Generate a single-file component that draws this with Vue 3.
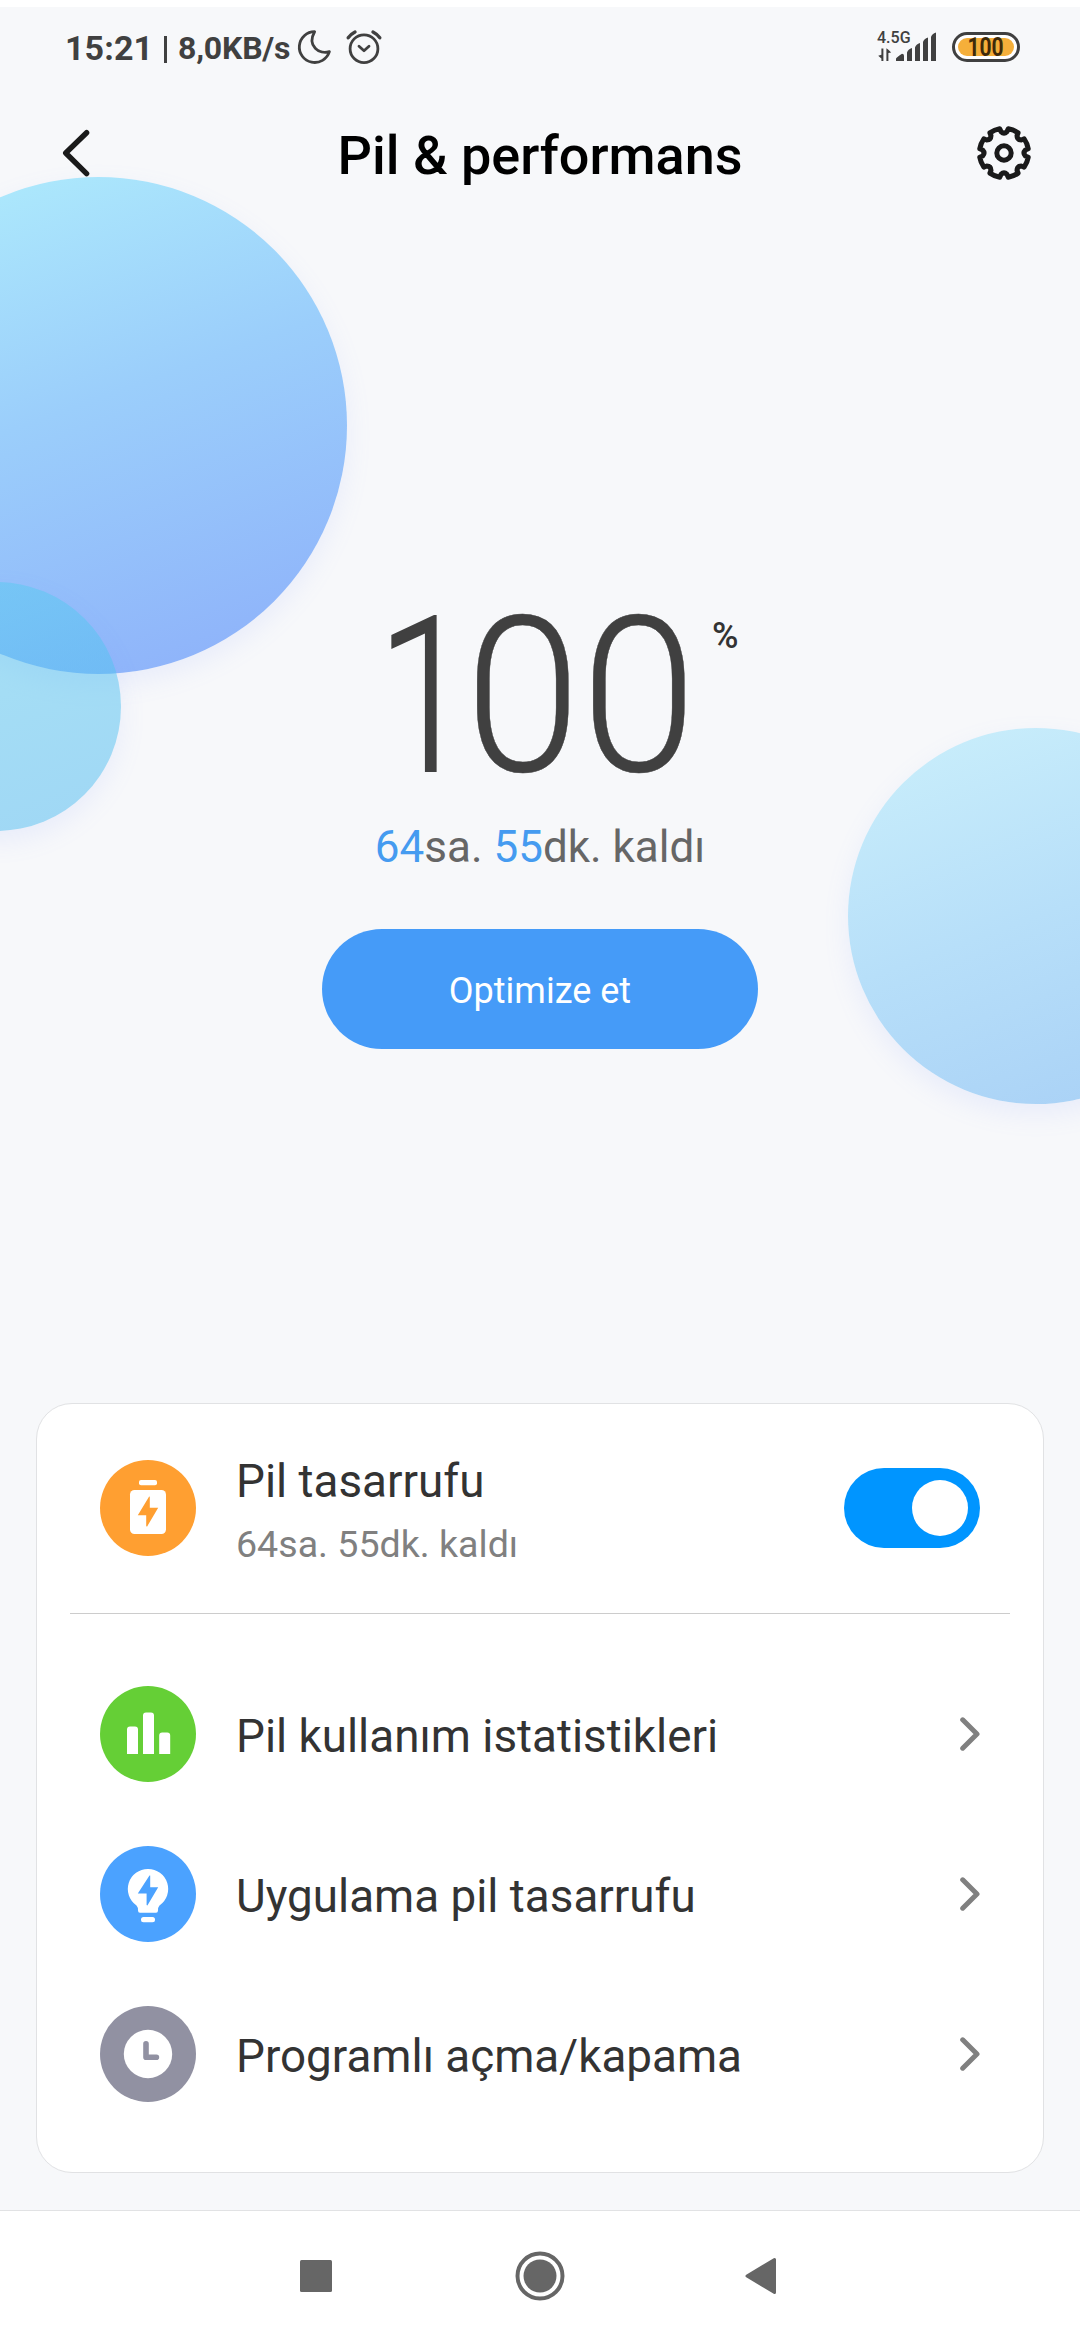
<script setup>
const rows = [
  { id: 'stats', label: 'Pil kullanım istatistikleri' },
  { id: 'apps', label: 'Uygulama pil tasarrufu' },
  { id: 'schedule', label: 'Programlı açma/kapama' },
]

// Cog outline: eight arcs joined by small inward notches
const point = (radius, deg) => {
  const a = ((deg - 90) * Math.PI) / 180
  return `${(28 + radius * Math.cos(a)).toFixed(2)} ${(28 + radius * Math.sin(a)).toFixed(2)}`
}
let cog = `M${point(24.6, 10)}`
for (let k = 1; k <= 8; k++) {
  const d = k * 45
  cog += `A24.6 24.6 0 0 1 ${point(24.6, d - 10)}`
  cog += `L${point(21.6, d - 8)}Q${point(18.6, d)} ${point(21.6, d + 8)}L${point(24.6, d + 10)}`
}
cog += 'Z'
</script>

<template>
  <div class="screen">
    <div class="bubble big"></div>
    <div class="bubble small"></div>
    <div class="bubble right"></div>

    <div class="status">
      <span class="time">15:21</span>
      <span class="bar"></span>
      <span class="speed">8,0KB/s</span>
      <svg class="moon" width="36" height="38" viewBox="0 0 36 38" fill="none" stroke="#404040" stroke-width="2.8" stroke-linejoin="round">
        <path d="M17.6 3.7A15.4 15.4 0 1 0 32.4 23.7C22.500 26.800 9.500 18 17.6 3.7Z" />
      </svg>
      <svg class="alarm" width="38" height="38" viewBox="0 0 38 38" fill="none" stroke="#404040" stroke-width="2.8" stroke-linecap="round" stroke-linejoin="round">
        <circle cx="19" cy="20.7" r="13.9" />
        <path d="M14 18.3L19 22.8L24 18.3" />
        <path d="M3.2 9.8Q6 6 10 4M34.8 9.8Q32 6 28 4" stroke-width="3.4" />
      </svg>
      <span class="spacer"></span>
      <div class="net">
        <span class="gen">4.5G</span>
        <svg width="60" height="34" viewBox="0 0 60 34" fill="#404040">
          <path d="M4.400 19.500h2v12.500h-2v-2.6l-3.200-2.6 3.200-1zM9.400 32h2v-8l2.800-.6-2.800-2.600-2-1.6z" />
          <path d="M19 32v-2.2q0-1 6-5q2 0 2 2V32zM30 32v-8.500q1-3.500 5-4.500V32zM38 32V18.500q1-3.500 5-4.500V32zM46 32V13q1-3.500 5-4.500V32zM54 32V8q1-3.500 5-4.500V32z" />
        </svg>
      </div>
      <div class="battery"><div class="charge"><span>100</span></div></div>
    </div>

    <header class="header">
      <svg width="30" height="50" viewBox="0 0 30 50" fill="none" stroke="#1a1a1a" stroke-width="5.4" stroke-linecap="round" stroke-linejoin="round">
        <path d="M25.600 4.700L4.700 25L25.600 45.700" />
      </svg>
      <h1>Pil &amp; performans</h1>
      <svg width="56" height="56" viewBox="0 0 56 56" fill="none" stroke="#1a1a1a" stroke-width="5" stroke-linejoin="round">
        <path :d="cog" />
        <circle cx="28" cy="28" r="7.200" />
      </svg>
    </header>

    <section class="hero">
      <div class="level">
        <div class="num"><span class="one">1</span><span>0</span><span>0</span></div>
        <span class="pct">%</span>
      </div>
      <div class="left"><b>64</b>sa. <b>55</b>dk. kaldı</div>
      <button class="optimize">Optimize et</button>
    </section>

    <section class="card">
      <div class="saver">
        <svg width="96" height="96" viewBox="0 0 96 96">
          <circle cx="48" cy="48" r="48" fill="#ff9f31" />
          <rect x="39" y="20" width="18" height="5.300" rx="2" fill="#fff" />
          <rect x="30" y="30" width="36" height="44" rx="4.500" fill="#fff" />
          <path d="M49.800 36.500V47.700H58.200L47 66.700L46.200 66V55.200H37.800L49 36.800Z" fill="#ff9f31" />
        </svg>
        <div class="texts">
          <div class="label">Pil tasarrufu</div>
          <div class="sub">64sa. 55dk. kaldı</div>
        </div>
        <div class="toggle"><div class="knob"></div></div>
      </div>
      <div class="rule"></div>
      <div class="rows">
        <div v-for="row in rows" :key="row.id" class="row">
          <svg v-if="row.id === 'stats'" width="96" height="96" viewBox="0 0 96 96">
            <circle cx="48" cy="48" r="48" fill="#65cf36" />
            <path fill="#fff" d="M27 68V43.500q0-3 3-3h5q3 0 3 3v24.500zM43 68V29.500q0-3 3-3h5q3 0 3 3v38.500zM59.200 68V49.500q0-3 3-3h5q3 0 3 3v18.500z" />
          </svg>
          <svg v-else-if="row.id === 'apps'" width="96" height="96" viewBox="0 0 96 96">
            <circle cx="48" cy="48" r="48" fill="#4ba2ff" />
            <path fill="#fff" d="M48 23A20 20 0 0 1 59.500 59.500Q58 61 58 64.500Q58 66.700 56 66.700H40Q38 66.700 38 64.500Q38 61 36.500 59.500A20 20 0 0 1 48 23Z" />
            <rect x="41" y="71" width="14" height="5.200" rx="2.500" fill="#fff" />
            <path d="M50.200 29.500V41.200H58.200L47.400 59.600L46.600 59V47.500H37.800L49.500 29.500Z" fill="#4ba2ff" />
          </svg>
          <svg v-else width="96" height="96" viewBox="0 0 96 96">
            <circle cx="48" cy="48" r="48" fill="#9191a2" />
            <circle cx="48" cy="48" r="24.200" fill="#fff" />
            <path d="M46 37.800V51.200H56.400" fill="none" stroke="#9191a2" stroke-width="5.600" stroke-linecap="round" stroke-linejoin="round" />
          </svg>
          <div class="label">{{ row.label }}</div>
          <svg class="chev" width="20" height="34" viewBox="0 0 20 34" fill="none" stroke="#808080" stroke-width="5" stroke-linecap="round" stroke-linejoin="round">
            <path d="M2.700 2.800L17 17L2.700 31.200" />
          </svg>
        </div>
      </div>
    </section>

    <nav class="nav">
      <svg width="32" height="32" viewBox="0 0 32 32"><rect width="32" height="32" rx="1.500" fill="#666" /></svg>
      <svg class="home" width="50" height="50" viewBox="0 0 50 50">
        <circle cx="25" cy="25" r="22.500" fill="none" stroke="#666" stroke-width="4" />
        <circle cx="25" cy="25" r="16.500" fill="#666" />
      </svg>
      <svg width="32" height="38" viewBox="0 0 32 38"><path d="M2 19L29.500 2.500V35.500Z" fill="#666" stroke="#666" stroke-width="3" stroke-linejoin="round" /></svg>
    </nav>
  </div>
</template>

<style>
body {
  margin: 0;
  background: #f7f8fa;
}
</style>

<style scoped>
.screen {
  position: relative;
  box-sizing: border-box;
  width: 1080px;
  height: 2340px;
  overflow: hidden;
  display: flex;
  flex-direction: column;
  background: #f7f8fa;
  border-top: 7px solid #fff;
  font-family: Roboto, "Noto Sans", sans-serif;
  color: #333;
}
.screen > *:not(.bubble) {
  position: relative;
}
svg {
  display: block;
  flex: none;
}
.bubble {
  position: absolute;
  border-radius: 50%;
  box-shadow: 0 10px 26px rgba(130, 160, 255, 0.12);
}
.big {
  left: -150px;
  top: 170px;
  width: 497px;
  height: 497px;
  background: linear-gradient(160deg, #aeebfc 5%, #9bcefb 46%, #8fb4fa 90%);
}
.small {
  left: -128px;
  top: 575px;
  width: 249px;
  height: 249px;
  background: linear-gradient(160deg, rgba(90, 205, 240, 0.5), rgba(72, 182, 240, 0.5));
}
.right {
  left: 848px;
  top: 721px;
  width: 376px;
  height: 376px;
  background: linear-gradient(160deg, #c9eefb 5%, #b7dff9 50%, #a9d1f6 95%);
}
.status {
  height: 82px;
  flex: none;
  display: flex;
  align-items: center;
  box-sizing: border-box;
  padding: 0 60px 0 65px;
  color: #404040;
}
.time {
  width: 99px;
  font-size: 34px;
  font-weight: 700;
  letter-spacing: 0.1px;
  white-space: nowrap;
}
.bar {
  width: 3px;
  height: 27px;
  margin-top: 2px;
  background: #404040;
}
.speed {
  width: 117px;
  margin-left: 11px;
  font-size: 32px;
  font-weight: 700;
  letter-spacing: -0.2px;
  white-space: nowrap;
}
.moon {
  margin: -2px 0 0 2px;
}
.alarm {
  margin: -2px 0 0 12px;
}
.spacer {
  flex: 1;
}
.net {
  position: relative;
  width: 60px;
  height: 34px;
  margin: -4px 15px 0 0;
}
.gen {
  position: absolute;
  left: 0;
  top: 1px;
  font-size: 16px;
  line-height: 16px;
  font-weight: 500;
}
.battery {
  box-sizing: border-box;
  width: 68px;
  height: 30px;
  margin-top: -2px;
  padding: 3px;
  border: 3px solid #404040;
  border-radius: 15px;
  background: #fff;
}
.charge {
  display: flex;
  justify-content: center;
  height: 18px;
  border-radius: 9px;
  background: #f5af3a;
  font-size: 25px;
  line-height: 19px;
  font-weight: 700;
  color: #3f2a0a;
}
.charge span {
  transform: scaleX(0.84);
}
.header {
  height: 128px;
  flex: none;
  display: flex;
  align-items: center;
  justify-content: space-between;
  box-sizing: border-box;
  padding: 0 48px 0 61px;
}
h1 {
  margin: 5px 0 0 13px;
  font-size: 54px;
  font-weight: 500;
  line-height: 60px;
  color: #000;
  white-space: nowrap;
}
.hero {
  height: 1186px;
  flex: none;
  box-sizing: border-box;
  padding-top: 397px;
  display: flex;
  flex-direction: column;
  align-items: center;
}
.level {
  display: flex;
  height: 160px;
  padding-left: 36px;
}
.num {
  display: flex;
  font-size: 217px;
  line-height: 166px;
  font-weight: 300;
  color: #404040;
}
.num span {
  width: 116px;
  transform: scaleX(0.96);
  transform-origin: left;
  -webkit-text-stroke: 0.4px #404040;
}
.num .one {
  width: 88px;
  transform: scaleX(0.8);
  -webkit-text-stroke: 2px #404040;
}
.pct {
  width: 27px;
  margin-left: 15px;
  font-size: 36px;
  line-height: 44px;
  font-weight: 500;
}
.left {
  margin-top: 43px;
  font-size: 44px;
  line-height: 60px;
  color: #666;
  white-space: nowrap;
}
.left b {
  font-weight: 400;
  color: #459bf0;
}
.optimize {
  width: 436px;
  height: 120px;
  margin-top: 52px;
  padding: 3px 0 0;
  border: 0;
  border-radius: 60px;
  background: #459bf8;
  color: #fff;
  font: 400 36px Roboto, "Noto Sans", sans-serif;
}
.card {
  box-sizing: border-box;
  height: 770px;
  flex: none;
  margin: 0 36px;
  border: 1px solid #e1e2e4;
  border-radius: 36px;
  background: #fff;
}
.saver {
  display: flex;
  align-items: center;
  box-sizing: border-box;
  height: 209px;
  padding: 0 63px 1px;
}
.texts {
  flex: 1;
  margin: 10px 0 0 40px;
}
.label {
  font-size: 45.8px;
  line-height: 62px;
  white-space: nowrap;
}
.sub {
  font-size: 37.6px;
  line-height: 62px;
  color: #808080;
  white-space: nowrap;
}
.toggle {
  box-sizing: border-box;
  display: flex;
  justify-content: flex-end;
  width: 136px;
  height: 80px;
  padding: 12px;
  border-radius: 40px;
  background: #0095ff;
}
.knob {
  width: 56px;
  height: 56px;
  border-radius: 50%;
  background: #fff;
}
.rule {
  height: 1px;
  margin: 0 33px;
  background: #ccc;
}
.rows {
  padding: 40px 63px 0;
}
.row {
  display: flex;
  align-items: center;
  height: 160px;
}
.row .label {
  flex: 1;
  margin: 5px 0 0 40px;
}
.nav {
  box-sizing: border-box;
  height: 130px;
  margin-top: auto;
  padding: 0 303px 0 300px;
  display: flex;
  align-items: center;
  justify-content: space-between;
  border-top: 1px solid #e1e2e4;
  background: #fff;
}
.home {
  margin-left: 3px;
}
</style>
